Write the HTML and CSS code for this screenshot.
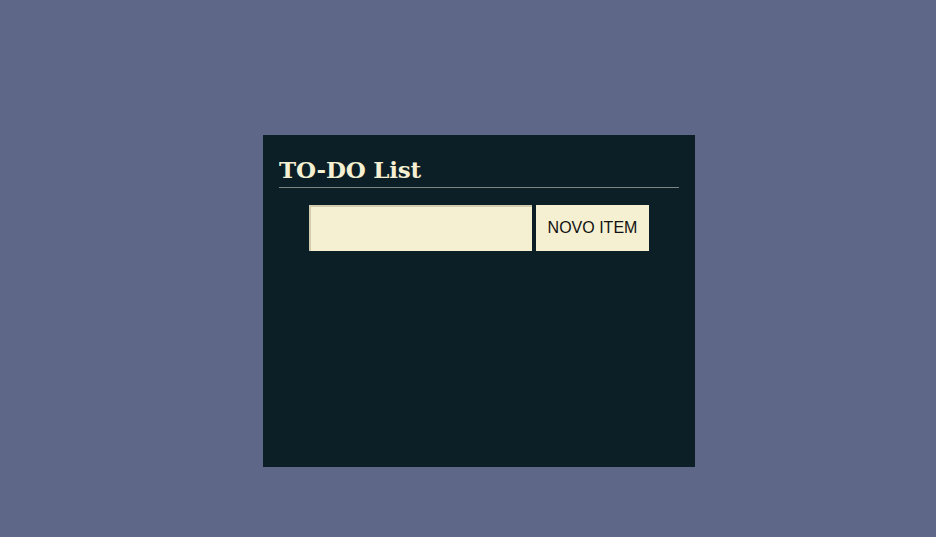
FILE: index.html
```html
<!DOCTYPE html>
<html lang="pt">
<head>
<meta charset="utf-8">
<title>TO-DO List</title>
<link rel="stylesheet" href="styles.css">
</head>
<body>
<main class="todo">
  <h1 class="todo-title">TO-DO List</h1>
  <form class="todo-form">
    <input class="todo-input" type="text">
    <button class="todo-button" type="button">NOVO ITEM</button>
  </form>
</main>
</body>
</html>
```
FILE: styles.css
```css
html, body {
  margin: 0;
  padding: 0;
}
body {
  background: #5f6788;
  min-height: 537px;
  padding: 135px 0 0 263px;
  box-sizing: border-box;
  font-family: "Liberation Sans", Arial, sans-serif;
}
.todo {
  width: 432px;
  height: 332px;
  box-sizing: border-box;
  background: #0c1f27;
  padding: 20px 16px;
}
.todo-title {
  margin: 0;
  font-family: "DejaVu Serif", serif;
  font-weight: bold;
  font-size: 23px;
  line-height: 30px;
  color: #f5f0d2;
  letter-spacing: -0.2px;
  padding-bottom: 2px;
  border-bottom: 1px solid #7b8680;
}
.todo-form {
  display: flex;
  justify-content: center;
  gap: 4px;
  margin-top: 17px;
}
.todo-input {
  width: 223px;
  height: 46px;
  box-sizing: border-box;
  background: #f5f0d2;
  border-style: solid;
  border-width: 2px 0 0 2px;
  border-color: #d3cdb0;
  margin: 0;
  padding: 0 6px;
}
.todo-button {
  width: 113px;
  height: 46px;
  box-sizing: border-box;
  background: #f5f0d2;
  border: none;
  margin: 0;
  font-family: "Liberation Sans", Arial, sans-serif;
  font-size: 16px;
  color: #111;
  padding: 0;
}
```
